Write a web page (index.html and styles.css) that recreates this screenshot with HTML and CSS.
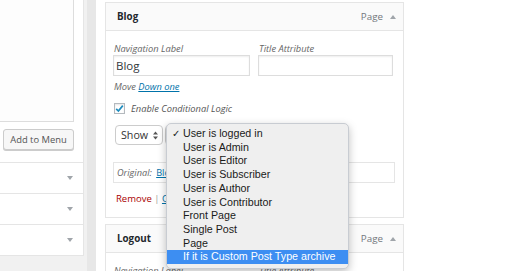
FILE: index.html
```html
<!DOCTYPE html>
<html lang="en">
<head>
<meta charset="UTF-8">
<title>Menus</title>
<link rel="stylesheet" href="styles.css">
</head>
<body>
<div class="sidebar">
    <div class="panel">
        <div class="panel-top">
            <div class="checklist"></div>
            <div class="panel-actions">
                <button class="button" type="button">Add to Menu</button>
            </div>
        </div>
        <ul class="accordion">
            <li><span class="caret-down"></span></li>
            <li><span class="caret-down"></span></li>
            <li><span class="caret-down"></span></li>
        </ul>
    </div>
</div>
<div class="gutter"></div>
<div class="menu-edit">
    <div class="item">
        <div class="item-bar">
            <span class="item-title">Blog</span>
            <span class="item-type">Page</span>
            <span class="caret-up"></span>
        </div>
        <div class="item-settings">
            <div class="fields">
                <label class="field">Navigation Label
                    <input type="text" value="Blog">
                </label>
                <label class="field">Title Attribute
                    <input type="text">
                </label>
            </div>
            <div class="move">Move <a href="#">Down one</a></div>
            <label class="check">
                <span class="checkbox">
                    <svg width="9" height="9" viewBox="0 0 9 9"><path d="M1.2 4.8 L3.4 7 L7.8 1.6" fill="none" stroke="#1e8cbe" stroke-width="1.7"/></svg>
                </span>
                Enable Conditional Logic
            </label>
            <div class="conditions">
                <div class="select show">Show
                    <svg width="5" height="9" viewBox="0 0 5 9"><path d="M0 3.5 L2.5 0.5 L5 3.5 Z M0 5.5 L2.5 8.5 L5 5.5 Z" fill="#555"/></svg>
                </div>
                <div class="select cond"></div>
                <ul class="popup">
                    <li class="checked">User is logged in</li>
                    <li>User is Admin</li>
                    <li>User is Editor</li>
                    <li>User is Subscriber</li>
                    <li>User is Author</li>
                    <li>User is Contributor</li>
                    <li>Front Page</li>
                    <li>Single Post</li>
                    <li>Page</li>
                    <li class="active">If it is Custom Post Type archive</li>
                </ul>
            </div>
            <div class="original">Original: <a href="#">Blog</a></div>
            <div class="actions"><a href="#" class="remove">Remove</a> | <a href="#">Cancel</a></div>
        </div>
    </div>
    <div class="item">
        <div class="item-bar">
            <span class="item-title">Logout</span>
            <span class="item-type">Page</span>
            <span class="caret-up"></span>
        </div>
        <div class="item-settings">
            <div class="fields">
                <label class="field">Navigation Label
                    <input type="text" value="Logout">
                </label>
                <label class="field">Title Attribute
                    <input type="text">
                </label>
            </div>
        </div>
    </div>
</div>
</body>
</html>
```
FILE: styles.css
```css
* { box-sizing: border-box; }
html, body { margin: 0; height: 271px; overflow: hidden; }
body { display: flex; background: #fff; font-family: "Open Sans", Arial, sans-serif; color: #444; }

/* left column */
.sidebar { width: 84px; flex: none; background: #f1f1f1; }
.panel { background: #fff; border-right: 1px solid #e5e5e5; }
.panel-top { padding-right: 9px; }
.checklist { width: 74px; height: 122px; background: #fdfdfd; border: solid #ddd; border-width: 0 1px 1px 0; }
.panel-actions { padding: 7px 0 12px 3px; }
.button { display: block; width: 71px; height: 21px; padding: 0; font: 9.4px "Open Sans", sans-serif; color: #555; background: #f7f7f7; border: 1px solid #ccc; border-radius: 3px; box-shadow: 0 1px 0 #ccc; }
.accordion { list-style: none; margin: 0; padding: 0; border-top: 1px solid #e5e5e5; }
.accordion li { height: 31px; border-bottom: 1px solid #e5e5e5; display: flex; align-items: center; justify-content: flex-end; padding-right: 10px; }
.caret-down { border-left: 3px solid transparent; border-right: 3px solid transparent; border-top: 4px solid #a0a5aa; }

.gutter { width: 12px; flex: none; background: linear-gradient(to right, #f1f1f1 3px, #e7e7e7 3px); }

/* menu structure */
.menu-edit { flex: 1; padding: 2px 0 0 9px; }
.item { width: 299px; border: 1px solid #e5e5e5; background: #fff; }
.item + .item { margin-top: 6px; }
.item-bar { display: flex; align-items: center; height: 28px; padding: 0 7px 0 11px; background: #fafafa; border-bottom: 1px solid #e5e5e5; font-size: 9.8px; }
.item-title { flex: 1; font-weight: 700; color: #23282d; }
.item-type { color: #72777c; margin-right: 7px; }
.caret-up { border-left: 3px solid transparent; border-right: 3px solid transparent; border-bottom: 4px solid #a0a5aa; }

.item-settings { padding: 12px 8px 12px 7px; }
.fields { display: grid; grid-template-columns: 138px 136px; column-gap: 7px; }
.field { display: block; padding-left: 1px; font-size: 9.3px; line-height: 12px; font-style: italic; color: #666; }
.field input { display: block; width: 100%; height: 21px; margin: 0 0 0 -1px; padding: 0 2px; border: 1px solid #ddd; box-shadow: inset 0 1px 2px rgba(0,0,0,.07); font: 11.5px "Open Sans", sans-serif; color: #32373c; }
.move { margin-top: 5px; padding-left: 1px; font-size: 9.3px; line-height: 12px; font-style: italic; color: #666; }
a { color: #0073aa; }
.check { display: flex; align-items: center; gap: 6px; margin: 9px 0 0 1px; height: 12px; font-size: 9.3px; font-style: italic; color: #555; }
.checkbox { width: 11px; height: 11px; border: 1px solid #b4b9be; background: #fff; box-shadow: inset 0 1px 2px rgba(0,0,0,.1); display: flex; align-items: center; justify-content: center; }

.conditions { position: relative; display: flex; gap: 2px; margin: 11px 0 0 2px; }
.select { height: 20px; border: 1px solid #ccc; border-radius: 4px; background: #fff; display: flex; align-items: center; font-size: 10.7px; color: #333; }
.show { width: 48px; padding: 0 4px 0 5px; justify-content: space-between; }
.cond { width: 180px; }

.popup { position: absolute; left: 51px; top: -2px; width: 183px; margin: 0; padding: 3px 0 4px; list-style: none; background: #efefef; border: 1px solid #c8ccd2; border-radius: 5px; box-shadow: 0 3px 8px rgba(0,0,0,.25); font: 10.7px/13.7px "Liberation Sans", Arial, sans-serif; color: #1a1a1a; }
.popup li { padding-left: 16px; white-space: nowrap; }
.popup .checked::before { content: "\2713"; display: inline-block; width: 11px; margin-left: -11px; font-size: 10px; }
.popup .active { background: #3d8ef2; color: #fff; }

.original { display: flex; align-items: center; margin-top: 17px; height: 21px; padding: 0 3px; border: 1px solid #e5e5e5; font-size: 9.2px; font-style: italic; color: #666; white-space: pre; }
.original a { font-style: normal; margin-left: 2px; }
.actions { margin-top: 10px; padding-left: 3px; font-size: 9.5px; line-height: 12px; color: #999; }
.actions .remove { color: #a00; text-decoration: none; }
```
